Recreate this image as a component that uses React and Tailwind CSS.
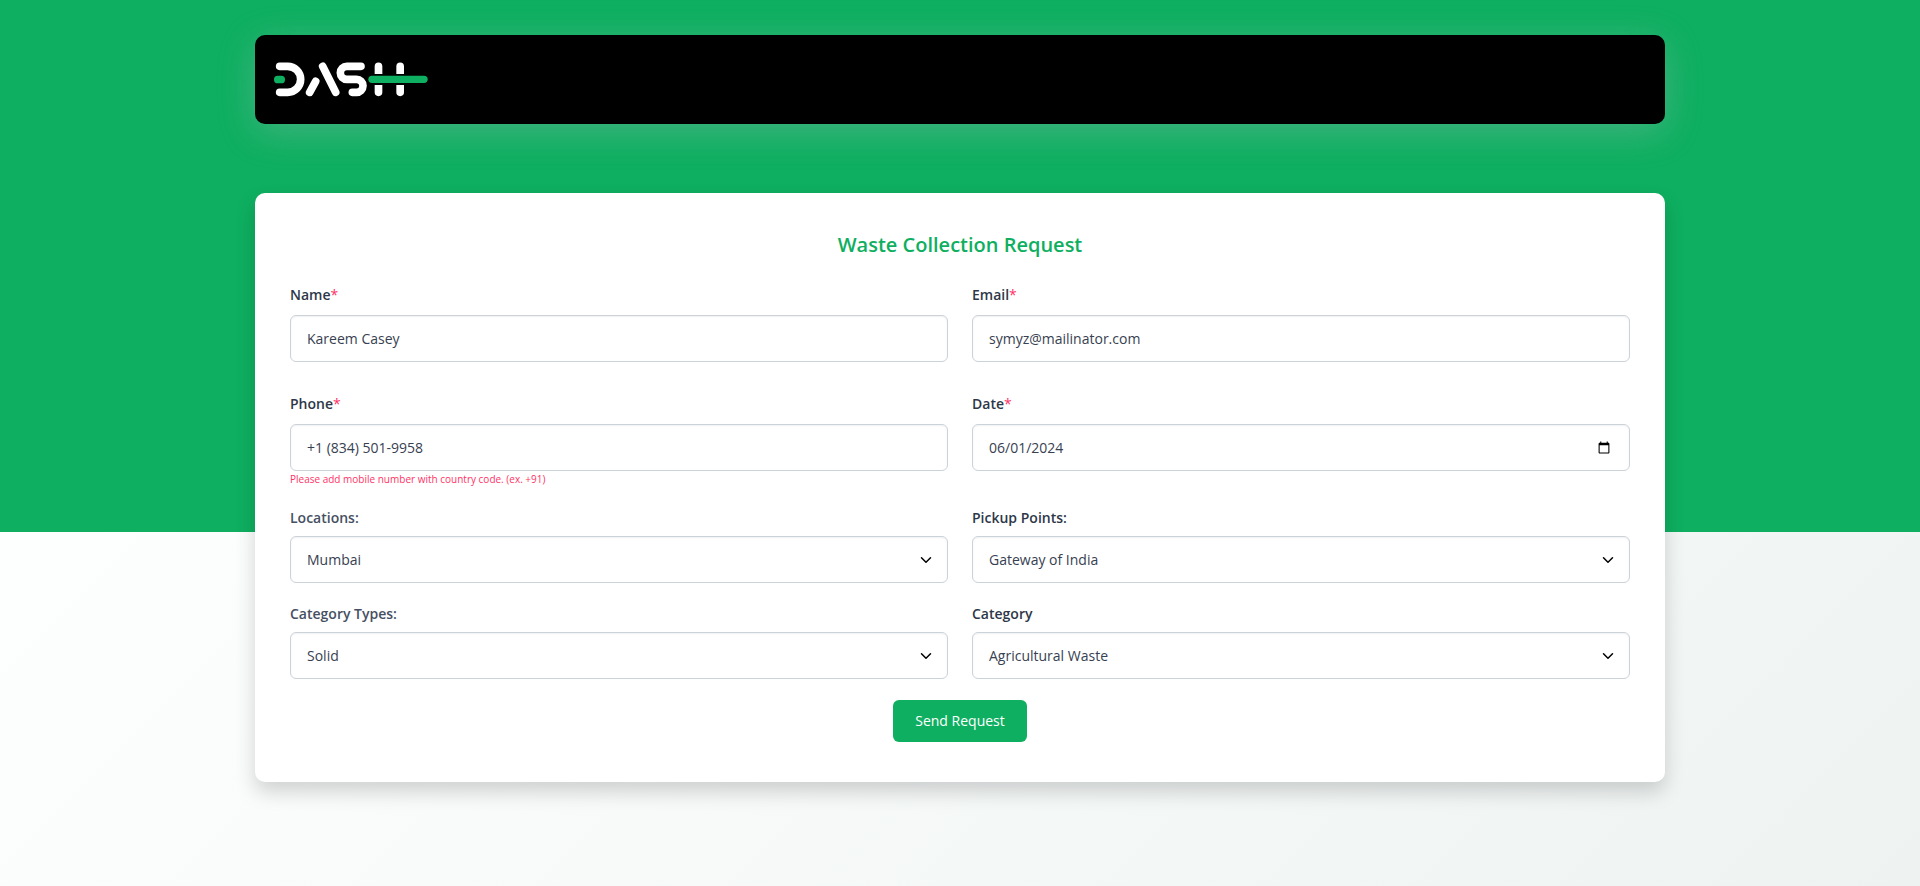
import React, { useState } from 'react';

const fieldClass =
  'block w-full h-[47px] rounded-md border border-[#cbd2d9] bg-white px-4 text-sm text-[#374151] shadow-[inset_0_1px_2px_rgba(0,0,0,0.06)] outline-none focus:border-[#0eaf60]';

const dateClass =
  '[&::-webkit-datetime-edit-month-field]:p-0 [&::-webkit-datetime-edit-day-field]:p-0 [&::-webkit-datetime-edit-year-field]:p-0';

function Logo() {
  return (
    <svg viewBox="99 123 468 111" width="156" height="37" fill="none" role="img" aria-label="Dash">
      <g stroke="#fff" strokeWidth="23" strokeLinecap="round">
        <path d="M119 139H143a39 39 0 0 1 0 78H119" />
        <path d="M209 217L227 184" />
        <path d="M248 139L287 217" />
        <path d="M363 139H320.5a19.5 19.5 0 0 0 0 39H349.5a19.5 19.5 0 0 1 0 39H337" />
        <path d="M415.500 139V217M480.500 139V217" />
      </g>
      <rect x="398" y="162" width="100" height="33" fill="#000" />
      <rect x="102" y="167" width="33" height="23" rx="11" fill="#0eaf60" />
      <rect x="385" y="167" width="178" height="22" rx="11" fill="#0eaf60" />
    </svg>
  );
}

function TextField({ id, label, type = 'text', value, onChange, help }) {
  return (
    <div>
      <label htmlFor={id} className="block text-sm leading-5 font-semibold text-[#2d3748]">
        {label}
        <span className="font-normal text-[#ff3366]">*</span>
      </label>
      <input
        id={id}
        name={id}
        type={type}
        value={value}
        onChange={onChange}
        className={`${fieldClass} ${dateClass} mt-[10px]`}
      />
      {help && <small className="block text-[10px] leading-4 text-[#ff3366]">{help}</small>}
    </div>
  );
}

function SelectField({ id, label, labelClass, value, onChange, options }) {
  return (
    <div>
      <label htmlFor={id} className={`block text-sm leading-5 font-semibold ${labelClass}`}>
        {label}
      </label>
      <div className="relative mt-2">
        <select
          id={id}
          name={id}
          value={value}
          onChange={onChange}
          className={`${fieldClass} appearance-none pr-10`}
        >
          {options.map((option) => (
            <option key={option}>{option}</option>
          ))}
        </select>
        <svg
          viewBox="0 0 16 16"
          className="pointer-events-none absolute inset-y-0 right-[14px] my-auto h-3 w-4"
          fill="none"
          stroke="#000"
          strokeWidth="2"
          strokeLinecap="round"
          strokeLinejoin="round"
        >
          <path d="m2 5 6 6 6-6" />
        </svg>
      </div>
    </div>
  );
}

function App() {
  const [form, setForm] = useState({
    name: 'Kareem Casey',
    email: 'symyz@mailinator.com',
    phone: '+1 (834) 501-9958',
    date: '2024-06-01',
    location: 'Mumbai',
    pickup: 'Gateway of India',
    categoryType: 'Solid',
    category: 'Agricultural Waste',
  });

  const update = (key) => (e) => setForm({ ...form, [key]: e.target.value });

  return (
    <div className="relative min-h-screen bg-linear-135 from-[#fdfffe] from-20% to-[#eef3f2] font-['Open_Sans',sans-serif]">
      {/* Green backdrop */}
      <div className="absolute inset-x-0 top-0 h-[60vh] bg-[#0eaf60]"></div>

      <div className="relative mx-auto max-w-[1410px] pt-[35px] pb-16">
        {/* Header */}
        <header className="rounded-[10px] bg-black px-[18px] py-[26px] shadow-[0_8px_36px_rgba(190,190,205,0.3)]">
          <a href="#" className="block w-fit">
            <Logo />
          </a>
        </header>

        {/* Request form */}
        <main className="mt-[69px] rounded-[10px] bg-white px-[35px] pt-9 pb-10 shadow-[0_10px_20px_rgba(0,0,0,0.17)]">
          <h1 className="text-center text-xl leading-8 font-semibold text-[#0eaf60]">
            Waste Collection Request
          </h1>

          <form onSubmit={(e) => e.preventDefault()}>
            <div className="mt-6 grid grid-cols-1 gap-x-6 gap-y-8 md:grid-cols-2">
              <TextField id="name" label="Name" value={form.name} onChange={update('name')} />
              <TextField id="email" label="Email" type="email" value={form.email} onChange={update('email')} />
              <TextField
                id="phone"
                label="Phone"
                type="tel"
                value={form.phone}
                onChange={update('phone')}
                help="Please add mobile number with country code. (ex. +91)"
              />
              <TextField id="date" label="Date" type="date" value={form.date} onChange={update('date')} />
            </div>

            <div className="mt-[21px] grid grid-cols-1 gap-x-6 gap-y-[21px] md:grid-cols-2">
              <SelectField
                id="location"
                label="Locations:"
                labelClass="text-[#465062]"
                value={form.location}
                onChange={update('location')}
                options={['Mumbai', 'Delhi', 'Pune']}
              />
              <SelectField
                id="pickup"
                label="Pickup Points:"
                labelClass="text-[#2d3748]"
                value={form.pickup}
                onChange={update('pickup')}
                options={['Gateway of India', 'Marine Drive']}
              />
              <SelectField
                id="categoryType"
                label="Category Types:"
                labelClass="text-[#465062]"
                value={form.categoryType}
                onChange={update('categoryType')}
                options={['Solid', 'Liquid']}
              />
              <SelectField
                id="category"
                label="Category"
                labelClass="text-[#2d3748]"
                value={form.category}
                onChange={update('category')}
                options={['Agricultural Waste', 'Household Waste']}
              />
            </div>

            <div className="mt-[21px] flex justify-center">
              <button
                type="submit"
                className="h-[42px] rounded-md bg-[#0eaf60] px-[22px] text-sm font-medium text-white"
              >
                Send Request
              </button>
            </div>
          </form>
        </main>
      </div>
    </div>
  );
}

export default App;
